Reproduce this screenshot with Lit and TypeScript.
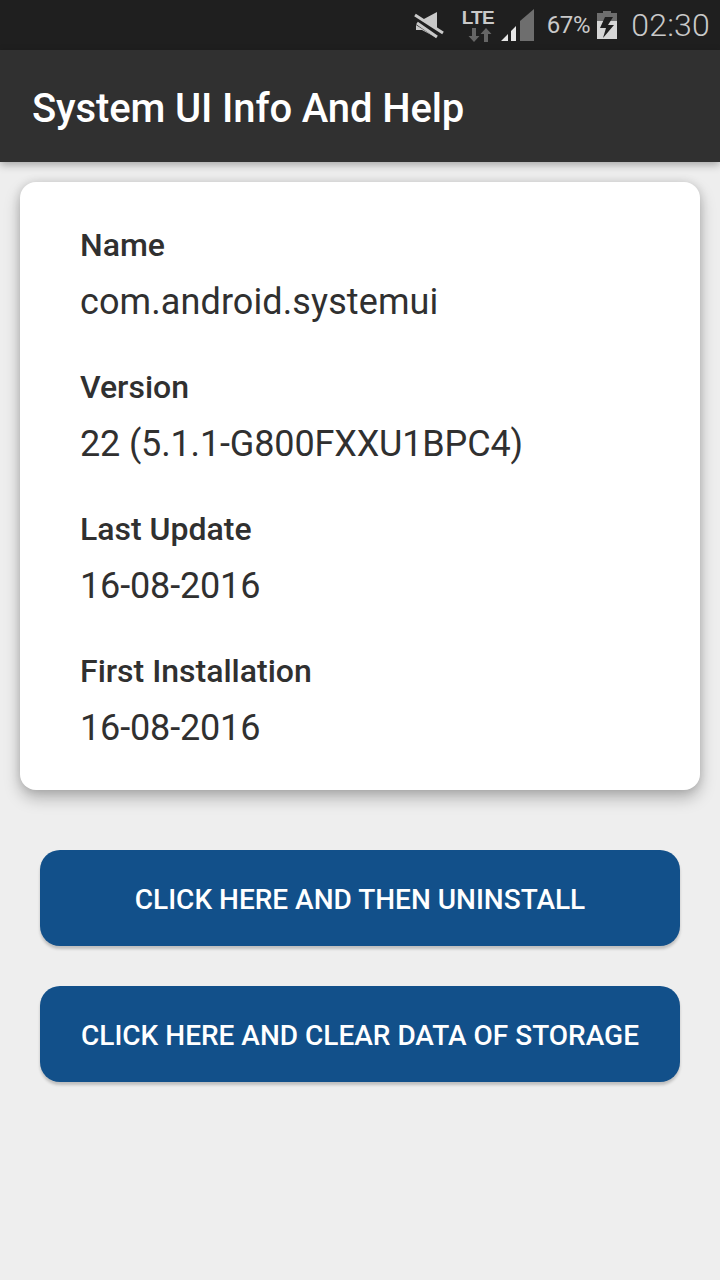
import { LitElement, html, css } from "lit";
import { customElement } from "lit/decorators.js";

const FIELDS: [string, string, boolean][] = [
  ["Name", "com.android.systemui", false],
  ["Version", "22 (5.1.1-G800FXXU1BPC4)", true],
  ["Last Update", "16-08-2016", true],
  ["First Installation", "16-08-2016", true],
];

@customElement("app-root")
export class AppRoot extends LitElement {
  static styles = css`
    :host {
      display: block;
      width: 720px;
      height: 1280px;
      background: #eeeeee;
      font-family: Roboto, sans-serif;
      overflow: hidden;
    }
    .status {
      height: 50px;
      background: #1f1f1f;
      display: flex;
      align-items: center;
      justify-content: flex-end;
      color: #c9c9c9;
    }
    .status svg { display: block; flex: none; }
    .mute { margin-right: 18px; }
    .lte {
      width: 36px;
      margin-right: 2px;
      display: flex;
      flex-direction: column;
      gap: 3px;
      padding-top: 1px;
    }
    .lte-text {
      font-family: "Liberation Sans", sans-serif;
      font-weight: 700;
      font-size: 19px;
      line-height: 15px;
      letter-spacing: -0.7px;
      white-space: nowrap;
      color: #c9c9c9;
    }
    .signal { margin-right: 13px; }
    .pct { font-size: 24px; margin-right: 7px; letter-spacing: -0.3px; }
    .batt { margin-right: 14px; }
    .time { font-size: 32px; margin-right: 10px; letter-spacing: 0.2px; font-weight: 300; }
    .bar {
      height: 112px;
      background: #303030;
      display: flex;
      align-items: center;
      padding: 5px 0 0 32px;
      box-sizing: border-box;
      box-shadow: 0 3px 8px rgba(0, 0, 0, 0.3);
      position: relative;
    }
    h1 {
      margin: 0;
      color: #fff;
      font-size: 40px;
      font-weight: 500;
      line-height: 1;
      letter-spacing: -0.13px;
    }
    .content {
      padding: 20px 20px 0;
      display: flex;
      flex-direction: column;
    }
    .card {
      background: #fff;
      border-radius: 16px;
      box-shadow: 0 8px 16px rgba(0, 0, 0, 0.26), 0 0 10px rgba(0, 0, 0, 0.12);
      padding: 40px 60px 26px;
      height: 608px;
      box-sizing: border-box;
      display: flex;
      flex-direction: column;
      gap: 30px;
    }
    .field { height: 112px; display: flex; flex-direction: column; color: #303030; }
    .label { font-size: 32px; font-weight: 500; line-height: 46px; }
    .value { font-size: 36px; line-height: 68px; letter-spacing: 0.1px; }
    .value.num { letter-spacing: -0.15px; }
    .actions {
      padding: 60px 40px 0;
      display: flex;
      flex-direction: column;
      gap: 40px;
    }
    .btn {
      height: 96px;
      border: none;
      border-radius: 20px;
      background: #12508a;
      color: #fff;
      font-family: inherit;
      font-size: 28px;
      font-weight: 500;
      box-shadow: 0 3px 3px rgba(0, 0, 0, 0.2);
      padding: 2px 0 0;
    }
  `;

  render() {
    return html`
      <div class="status">
        <svg class="mute" width="30" height="28" viewBox="0 0 30 28">
          <path fill="#c9c9c9" d="M2 9h6L23 1v26L8 19H2z" />
          <path stroke="#1f1f1f" stroke-width="8" d="M0 8l30 19" />
          <path stroke="#c9c9c9" stroke-width="3" fill="none" d="M1 4l28 18M3 12l20 14" />
        </svg>
        <div class="lte">
          <span class="lte-text">LTE</span>
          <svg width="36" height="14" viewBox="0 0 36 14">
            <path fill="#666" d="M10 0h4v8h3.500l-5.500 6-5.500-6H10zM22 14V6h-3.500L24 0l5.500 6H26v8z" />
          </svg>
        </div>
        <svg class="signal" width="34" height="32" viewBox="0 0 34 32">
          <path fill="#e6e6e6" d="M1 32l7-7v7zM11 22l5-5v15h-5z" />
          <path fill="#6e6e6e" d="M20 12L34 0v32H20z" />
        </svg>
        <span class="pct">67%</span>
        <svg class="batt" width="20" height="28" viewBox="0 0 20 28">
          <path fill="#6e6e6e" d="M6 0h8v2h6v8H0V2h6z" />
          <path fill="#d6d6d6" d="M0 10h20v18H0z" />
          <path fill="#1f1f1f" d="M16 6H8L3 17h6L6 27l11-13h-6z" />
        </svg>
        <span class="time">02:30</span>
      </div>
      <div class="bar"><h1>System UI Info And Help</h1></div>
      <div class="content">
        <div class="card">
          ${FIELDS.map(
            ([l, v, num]) => html`<div class="field">
              <div class="label">${l}</div>
              <div class="value ${num ? "num" : ""}">${v}</div>
            </div>`
          )}
        </div>
      </div>
      <div class="actions">
        <button class="btn">CLICK HERE AND THEN UNINSTALL</button>
        <button class="btn">CLICK HERE AND CLEAR DATA OF STORAGE</button>
      </div>
    `;
  }
}
